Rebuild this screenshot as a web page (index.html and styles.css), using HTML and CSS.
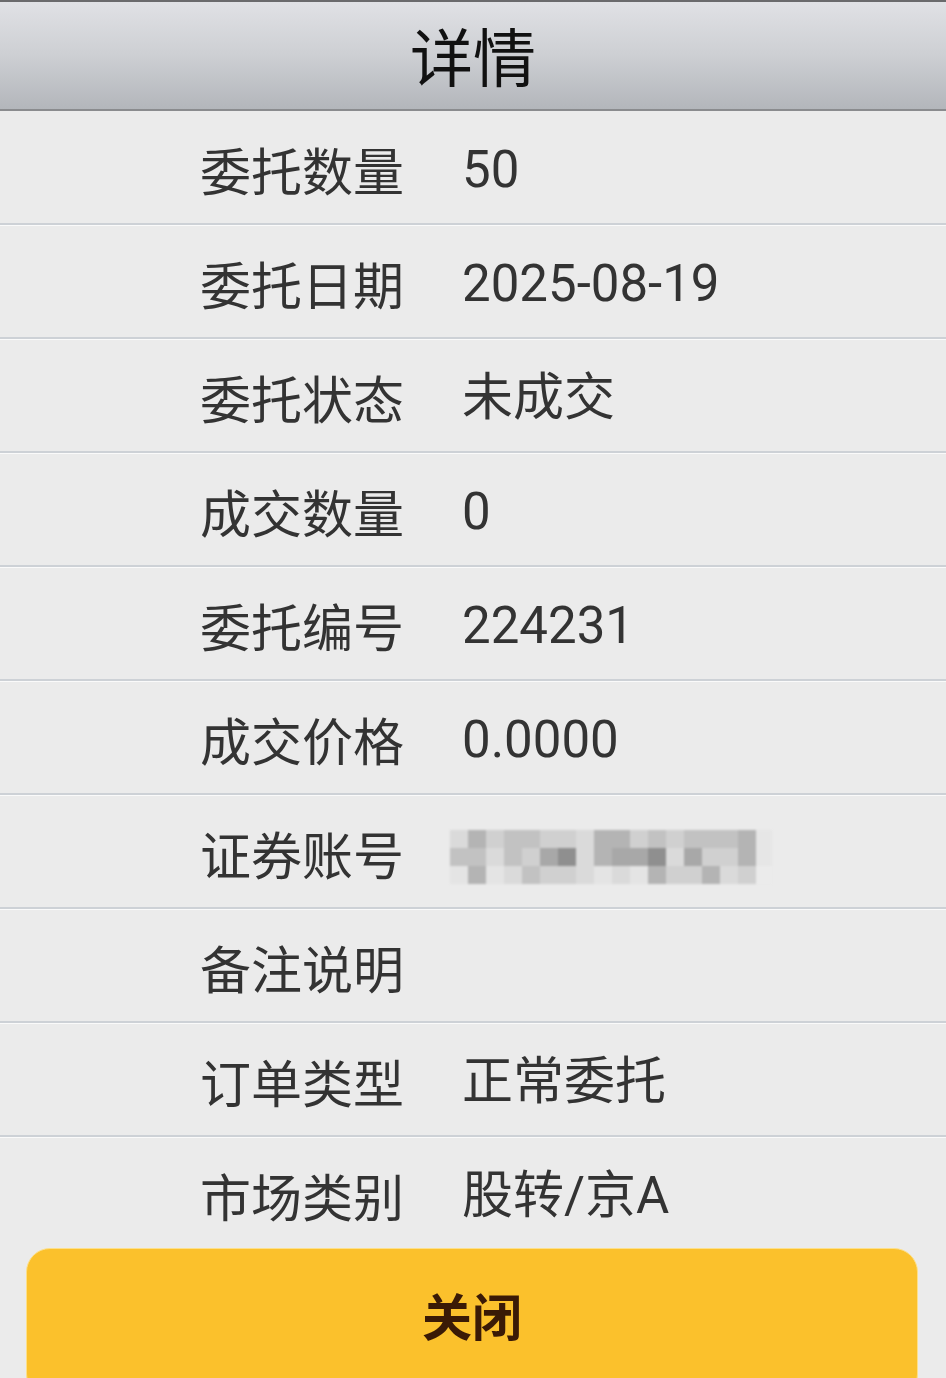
FILE: index.html
```html
<!DOCTYPE html>
<html lang="zh-CN">
<head>
<meta charset="utf-8">
<title>详情</title>
<link rel="stylesheet" href="styles.css">
</head>
<body>
<div class="page">
  <header class="topbar"><h1 class="title">详情</h1></header>
  <ul class="list">
    <li class="row"><span class="label">委托数量</span><span class="value">50</span></li>
    <li class="row"><span class="label">委托日期</span><span class="value">2025-08-19</span></li>
    <li class="row"><span class="label">委托状态</span><span class="value">未成交</span></li>
    <li class="row"><span class="label">成交数量</span><span class="value">0</span></li>
    <li class="row"><span class="label">委托编号</span><span class="value">224231</span></li>
    <li class="row"><span class="label">成交价格</span><span class="value">0.0000</span></li>
    <li class="row"><span class="label">证券账号</span>
      <span class="mosaic">
        <i class="s5"></i><i class="s2"></i><i class="s4"></i><i class="s3"></i><i class="s3"></i><i class="s4"></i><i class="s4"></i><i class="s5"></i><i class="s2"></i><i class="s2"></i><i class="s4"></i><i class="s3"></i><i class="s4"></i><i class="s3"></i><i class="s3"></i><i class="s3"></i><i class="s2"></i><i class="s7"></i>
        <i class="s3"></i><i class="s3"></i><i class="s5"></i><i class="s3"></i><i class="s4"></i><i class="s1"></i><i class="s0"></i><i class="s5"></i><i class="s2"></i><i class="s1"></i><i class="s1"></i><i class="s0"></i><i class="s5"></i><i class="s1"></i><i class="s4"></i><i class="s4"></i><i class="s2"></i><i class="s7"></i>
        <i class="s6"></i><i class="s2"></i><i class="s6"></i><i class="s5"></i><i class="s3"></i><i class="s4"></i><i class="s4"></i><i class="s5"></i><i class="s6"></i><i class="s5"></i><i class="s6"></i><i class="s2"></i><i class="s4"></i><i class="s4"></i><i class="s2"></i><i class="s5"></i><i class="s4"></i><i class="s8"></i>
      </span>
    </li>
    <li class="row"><span class="label">备注说明</span><span class="value"></span></li>
    <li class="row"><span class="label">订单类型</span><span class="value">正常委托</span></li>
    <li class="row last"><span class="label">市场类别</span><span class="value">股转/京A</span></li>
  </ul>
  <div class="actions"><button class="close-btn" type="button">关闭</button></div>
</div>
</body>
</html>
```

FILE: styles.css
```css
* { box-sizing: border-box; }
html, body {
  margin: 0;
  padding: 0;
}
body {
  width: 946px;
  height: 1378px;
  overflow: hidden;
  background: #ebebeb;
  font-family: Roboto, "Noto Sans CJK SC", sans-serif;
  color: #333333;
}
.page {
  display: flex;
  flex-direction: column;
}
.topbar {
  height: 111px;
  border-top: 2px solid #6a6a6c;
  border-bottom: 2px solid #8a8b8e;
  background: linear-gradient(to bottom, #e0e1e5 0%, #cdcfd3 50%, #b3b6bb 100%);
  display: flex;
  align-items: center;
  justify-content: center;
}
.title {
  margin: 0;
  font-family: "Noto Sans CJK SC", sans-serif;
  font-weight: 400;
  font-size: 63px;
  line-height: 1;
  color: #111111;
  padding-bottom: 4px;
}
.list {
  list-style: none;
  margin: 0;
  padding: 0;
}
.row {
  height: 114px;
  border-top: 1px solid #fafafa;
  border-bottom: 2px solid #cdd1d6;
  display: grid;
  grid-template-columns: 262px 1fr;
  align-items: center;
  padding-left: 200px;
  padding-top: 4px;
}
.row:first-child { border-top: 1px solid #ebebeb; }
.row.last {
  border-bottom: none;
  height: 111px;
}
.label {
  font-family: "Noto Sans CJK SC", sans-serif;
  font-size: 51px;
  line-height: 1;
  color: #333333;
}
.value {
  font-family: Roboto, "Noto Sans CJK SC", sans-serif;
  font-size: 51px;
  line-height: 1;
  color: #333333;
}
.mosaic {
  display: grid;
  grid-template-columns: repeat(17, 18px) 16px;
  grid-auto-rows: 18px;
  margin-left: -12px;
  margin-top: 6px;
  width: max-content;
  filter: blur(1.2px);
}
.mosaic i { display: block; }
.s0 { background: #8f8f8f; }
.s1 { background: #a8a8a8; }
.s2 { background: #b4b4b4; }
.s3 { background: #c2c2c2; }
.s4 { background: #d0d0d0; }
.s5 { background: #dadada; }
.s6 { background: #e4e4e4; }
.s7 { background: #e6e6e6; }
.s8 { background: #ebebeb; }
.actions {
  padding: 0 28px 0 26px;
}
.close-btn {
  display: flex;
  width: 100%;
  height: 150px;
  margin: 0;
  border: 1px solid #fde08a;
  border-radius: 24px;
  background: #fbc12c;
  font-family: "Noto Sans CJK SC", sans-serif;
  font-weight: 700;
  font-size: 50px;
  line-height: 1;
  color: #3a1a06;
  justify-content: center;
  align-items: flex-start;
  padding-top: 40px;
}
```
